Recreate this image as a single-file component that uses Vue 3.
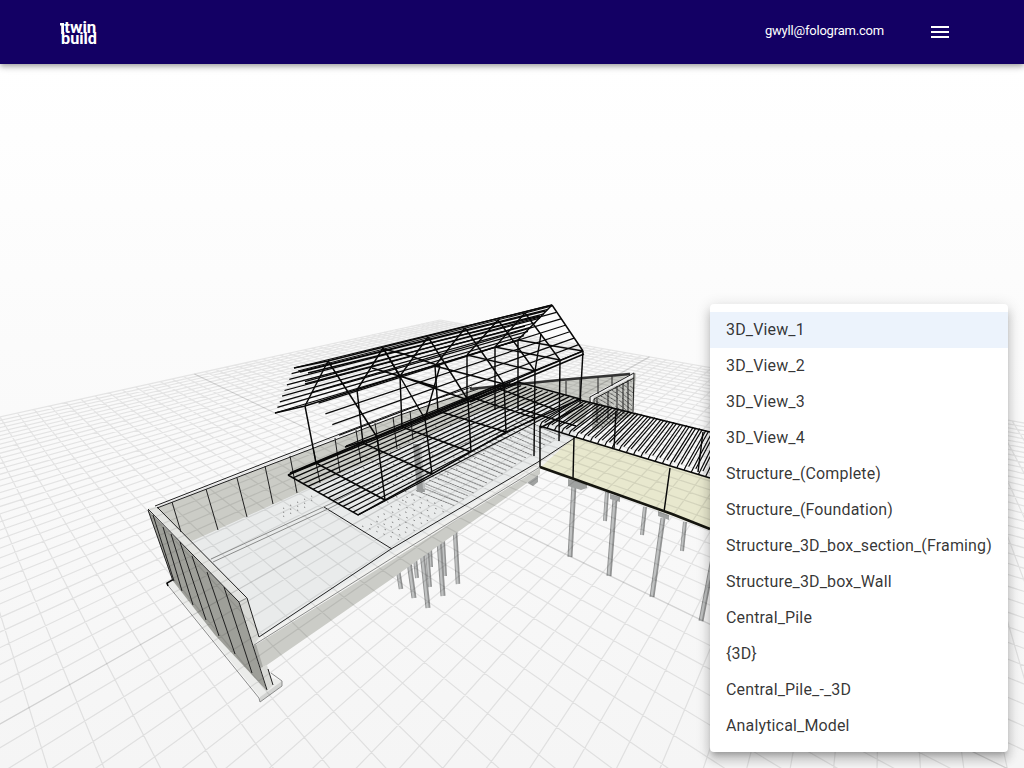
<script setup>
const views = [
  '3D_View_1', '3D_View_2', '3D_View_3', '3D_View_4',
  'Structure_(Complete)', 'Structure_(Foundation)',
  'Structure_3D_box_section_(Framing)', 'Structure_3D_box_Wall',
  'Central_Pile', '{3D}', 'Central_Pile_-_3D', 'Analytical_Model'
]

// Ground plane: centre, two vanishing points and the weight of one half-extent
const C = [423, 485], VA = [890, 221], VB = [-121, 221]
const WA = 0.942, WB = 0.725, N = 35

function project(u, v) {
  const a = (u / N) * WA
  const b = (v / N) * WB
  const w = 1 + a + b
  return [(C[0] + a * VA[0] + b * VB[0]) / w, (C[1] + a * VA[1] + b * VB[1]) / w, w]
}
const seg = (p, q) => `M${p[0].toFixed(1)} ${p[1].toFixed(1)}L${q[0].toFixed(1)} ${q[1].toFixed(1)}`
const mix = (p, q, t) => [p[0] + (q[0] - p[0]) * t, p[1] + (q[1] - p[1]) * t]

// Lines are cut where they would pass behind the camera
function ground(k, alongU) {
  const other = (k / N) * (alongU ? WB : WA)
  const weight = alongU ? WA : WB
  const start = Math.max(-N, ((0.2 - 1 - other) / weight) * N)
  if (start >= N) return ''
  return alongU ? seg(project(start, k), project(N, k)) : seg(project(k, start), project(k, N))
}
let grid = ''
for (let k = -N; k <= N; k++) if (k) grid += ground(k, true) + ground(k, false)
const axes = ground(0, true) + ground(0, false)

function fan(a, b, c, d, n, from = 0) {
  let s = ''
  for (let i = from; i <= n; i++) s += seg(mix(a, b, i / n), mix(c, d, i / n))
  return s
}

const trusses = [
  [[305, 406], [328, 361], [377, 437], [316, 463], [385, 500]],
  [[357, 390], [383, 348], [425, 419], [363, 443], [432, 474]],
  [[400, 376], [428, 337], [468, 400], [402, 427], [471, 452]],
  [[435, 366], [465, 328], [504, 384], [438, 411], [506, 432]],
  [[467, 355], [498, 320], [535, 371], [467, 398], [534, 456]],
  [[495, 347], [525, 313], [560, 360], [495, 410], [559, 441]],
  [[518, 340], [552, 305], [583, 351], [518, 409], [580, 404]]
]
const frames = trusses.map(([l, a, r, lb, rb]) => seg(l, a) + seg(a, r) + seg(l, lb) + seg(r, rb)).join('')
const ties = trusses.slice(2).map(([l, , r]) => seg(l, r)).join('') +
  'M372 368L437 387M383 349L404 354L440 366M400 376L383 348M425 419L440 366M535 371L541 334'
const roofLeft = fan([294, 368], [275, 413], [552, 305], [520, 340], 8)
const roofRight = fan([298, 371], [346, 446], [552, 306], [583, 351], 7)
const ridge = 'M294 368L328 361L552 305M300 372L545 311M308 373L540 316M305 384L525 326'
const floorJoists = fan([288, 475], [358, 515], [505, 382], [580, 399], 14)
const floorBeams = 'M288 475L358 515L432 474L506 432L580 399L518 382L420 421L288 475M290 473L420 418L515 380' +
  'M316 463L385 500M363 443L432 474M402 427L471 452M438 411L506 432M470 397L535 418M495 387L556 410'

let deck = ''
for (let i = 0; i <= 25; i++) {
  const t = i / 25
  const top = mix([578, 399], [738, 438], t)
  const bot = mix([542, 422], [722, 477], t)
  deck += seg(top, bot) + seg(bot, [bot[0] - 2, bot[1] + 4])
  deck += seg([top[0] + 2.6, top[1] + 1], [bot[0] + 2.6, bot[1] + 0.5])
}

// Hatch marks on the slab, denser towards the far end
let hatch = ''
for (let r = 0; r < 34; r++) {
  const t = r / 33
  const l = mix([362, 526], [520, 418], t)
  const e = mix([400, 540], [560, 436], t)
  for (let c = 0; c < 16; c++) {
    if (r < 11 && (r * 7 + c * 5) % 3) continue
    const p = mix(l, e, (c + (r % 2) * 0.5) / 16)
    const len = r < 11 ? 1.4 : 2.2
    hatch += seg(p, [p[0] + len, p[1] + 0.6])
  }
}
for (let r = 0; r < 15; r++) {
  for (let c = 0; c < 9; c++) {
    if ((r * 3 + c * 5) % 4 === 0) continue
    const p = [345 + r * 9 + c * 6, 478 - r * 5.2 + c * 3.4]
    hatch += seg(p, [p[0] + 1.5, p[1] + 0.5])
  }
}
for (let i = 0; i < 14; i++) {
  const p = [283 + (i % 5) * 7, 508 - (i % 5) * 3 + Math.floor(i / 5) * 4]
  hatch += seg(p, [p[0] + 1.2, p[1] + 0.5])
}
let speckle = ''
for (let i = 0; i < 190; i++) {
  const u = ((i * 37) % 101) / 101
  const v = ((i * 61) % 97) / 97
  const p = mix(mix([594, 399], [633, 378], u), mix([592, 430], [631, 414], u), v)
  speckle += seg(p, [p[0] + 1.2, p[1] + 1])
}

const piles = [
  [415, 558, 417, 578, 4], [430, 548, 431, 567, 4], [443, 540, 445, 576, 4], [427, 551, 430, 587, 4],
  [398, 570, 401, 589, 4.5], [409, 562, 414, 598, 5], [422, 552, 428, 608, 5],
  [439, 541, 443, 596, 5], [455, 531, 458, 584, 4.5],
  [607, 492, 605, 521, 4], [645, 507, 642, 535, 4], [685, 522, 682, 551, 4],
  [574, 484, 570, 557, 5], [615, 499, 609, 576, 5], [663, 518, 652, 597, 5], [715, 548, 701, 621, 5]
]
</script>

<template>
  <div class="page">
    <header class="bar">
      <svg class="logo" width="40" height="28" viewBox="58 18 40 28" role="img">
        <path d="M60 23h4v11h-2.8v-8.6H60z" />
        <text x="64.3" y="33" textLength="32" lengthAdjust="spacingAndGlyphs">twin</text>
        <text x="61" y="43.6" textLength="36" lengthAdjust="spacingAndGlyphs">build</text>
      </svg>
      <div class="account">
        <span class="email">gwyll@fologram.com</span>
        <button class="burger" aria-label="Menu">
          <svg width="24" height="24" viewBox="0 0 24 24"><path d="M3 18h18v-2H3v2zm0-5h18v-2H3v2zm0-7v2h18V6H3z" /></svg>
        </button>
      </div>
    </header>

    <main class="viewport">
      <svg class="scene" width="1024" height="704" viewBox="0 64 1024 704">
        <g v-for="(p, i) in piles" :key="i">
          <path :d="`M${p[0]} ${p[1]}L${p[2]} ${p[3]}`" stroke="#929393" :stroke-width="p[4]" />
          <path :d="`M${p[0] - 0.4} ${p[1]}L${p[2] - 0.4} ${p[3]}`" stroke="#bfc1c1" :stroke-width="p[4] * 0.45" />
        </g>
        <g fill="#a0a2a1">
          <path d="M568 479l19 5v4l-6 2-13-4zM610 494l10 3v5l-10-3zM658 511l11 4v5l-11-4zM528 477l10-5v10l-5 4-5-3z" />
        </g>

        <path fill="#ebecea" d="M167 583L175 578L266 690L272 678L282 681L260 697z" />
        <path fill="#d2d3d1" d="M260 697L282 681V686L260 702z" />
        <path class="gray" d="M166 583L259 698L260 702L282 686V681L271 673" />
        <path class="edge" d="M174 579L167 583L168 586" />

        <path fill="#cbccc6" d="M157 508L280 461L400 415L475 388L545 384V402L360 466L190 543z" />
        <path fill="#cbccc6" d="M478 387L560 379L631 373L592 398L583 425L530 410z" />
        <path fill="#e9ebeb" d="M190 542L340 474L480 412L560 400L577 438L540 465L260 638L215 572z" />
        <path fill="#f1f1ef" d="M259 638L538 462L576 436L577 442L540 468L253 646z" />
        <path fill="#cbccc7" d="M254 646L540 468V474L527 483L390 580L267 665L261 668z" />
        <path fill="#c9cac5" d="M592 398L636 373L633 415L592 432z" />
        <path class="speckle" :d="speckle" />

        <path fill="#9e9f99" d="M148 510L239 602L267 691L215 635L173 581z" />
        <path fill="#e4e5e2" d="M148 508L157 507L247 598L239 602z" />
        <path fill="#d9dad6" d="M239 602L247 598L259 638L254 645L261 667L267 665L273 685L267 691z" />
        <path fill="#a9aaa5" d="M253 646l3-2 7 23-3 1z" />

        <path fill="#e8e8ce" d="M541 467L575 436L710 478V530L574 479z" />

        <path class="grid" :d="grid" />
        <path class="axes" :d="axes" />

        <path class="edge thin" d="M155 506L280 457L400 411L472 387M157 508L280 461L400 415L478 389M148 509L239 602L267 690M157 507L247 598L259 637M268 669L273 685M259 637L391 549L538 462L576 437M324 507L392 549" />
        <path class="gray" d="M247 598L239 602M254 645L400 553L540 467M213 562L330 508L408 468L500 428M211 559L330 504L408 464" />
        <path class="edge thin" d="M172 502L181 532M206 489L218 530M237 478L247 517M265 466L273 504M290 456L297 493M313 447L320 483M335 438L340 473M356 430L361 463M375 423L380 455M393 417L397 449M410 411L413 440" />
        <path class="edge thin" d="M148 510L173 581M153 515L174 581M163 527L182 591M171 534L193 605M180 542L206 620M192 556L219 636M207 572L235 654M224 587L252 673" />
        <path class="hatch" :d="hatch" />
        <path fill="#999b9b" d="M413 444h7l5 48h-8z" />
        <path stroke="#bcbebe" stroke-width="2" d="M420 444L424 489" />

        <path class="wall-top" d="M470 389L560 380L630 374" />
        <path stroke="#eee" fill="none" stroke-width="3" d="M592 400V396L634 375" />
        <path class="edge thin" d="M590 405V397L634 373L633 412M594 404V399L634 378M597 398v25M608 392v27M617 386v30M623 383v31M628 380v33M580 379v22M598 377v17M612 376v10M566 381v14" />

        <path class="joist" :d="floorJoists" />
        <path class="edge" :d="floorBeams" />
        <path class="joist" :d="deck" />
        <path class="edge" d="M580 400L710 432M540 426L575 437L710 478M540 426V467M574 437L573 479M670 468L664 512M703 432L698 472M616 411L614 449M583 405L540 428M520 409L576 426" />
        <path stroke="#15150f" stroke-width="2.6" d="M540 467L574 479L672 514L710 529" />

        <path class="joist" :d="roofLeft" />
        <path class="joist" :d="roofRight" />
        <path class="edge" :d="ridge" />
        <path class="edge" :d="frames" />
        <path class="edge" :d="ties" />
        <path class="edge" d="M275 413L305 406L400 376L518 340M583 351L535 371L468 400L377 437L345 447M584 354L536 374L470 402" />
      </svg>
    </main>

    <ul class="menu" role="listbox">
      <li v-for="(v, i) in views" :key="v" :class="{ selected: i === 0 }">{{ v }}</li>
    </ul>
  </div>
</template>

<style>
body { margin: 0; overflow: hidden; }
</style>

<style scoped>
.page {
  position: relative;
  width: 1024px;
  height: 768px;
  overflow: hidden;
  display: flex;
  flex-direction: column;
  font-family: Roboto, "Liberation Sans", sans-serif;
}
.bar {
  position: relative;
  z-index: 1;
  flex: none;
  box-sizing: border-box;
  height: 64px;
  padding: 0 72px 0 58px;
  display: flex;
  align-items: center;
  justify-content: space-between;
  background: #130064;
  color: #fff;
  box-shadow: 0 2px 4px -1px rgba(0,0,0,.2), 0 4px 5px rgba(0,0,0,.14), 0 1px 10px rgba(0,0,0,.12);
}
.logo { fill: #fff; font: 700 16.5px Roboto, sans-serif; overflow: visible; }
.account { display: flex; align-items: center; gap: 44px; }
.email { font-size: 13px; letter-spacing: -.2px; line-height: 20px; margin-top: -3px; }
.burger { display: flex; padding: 0; border: 0; background: none; fill: #fff; }
.viewport { flex: 1; background: linear-gradient(#fff, #f5f5f5); }
.scene { display: block; fill: none; }
.grid { stroke: rgba(0,0,0,.085); stroke-width: 1.25; }
.axes { stroke: rgba(0,0,0,.15); stroke-width: 1.25; }
.edge { stroke: #080808; stroke-width: 1.45; }
.edge.thin { stroke: #202020; stroke-width: 1; }
.wall-top { stroke: #333; stroke-width: 2.6; }
.gray { stroke: #8b8c8b; stroke-width: 1; }
.joist { stroke: #090909; stroke-width: 1.2; }
.hatch { stroke: #666; stroke-width: .8; }
.speckle { stroke: #444; stroke-width: .8; }
.menu {
  position: absolute;
  z-index: 2;
  left: 710px;
  top: 304px;
  width: 298px;
  margin: 0;
  padding: 8px 0;
  list-style: none;
  background: #fff;
  border-radius: 4px;
  box-shadow: 0 5px 5px -3px rgba(0,0,0,.2), 0 8px 10px 1px rgba(0,0,0,.14), 0 3px 14px 2px rgba(0,0,0,.12);
}
.menu li {
  height: 36px;
  padding: 0 16px;
  font-size: 16px;
  line-height: 35px;
  letter-spacing: .15px;
  color: rgba(0,0,0,.8);
  white-space: nowrap;
}
.menu li.selected { background: #ecf3fc; }
</style>
